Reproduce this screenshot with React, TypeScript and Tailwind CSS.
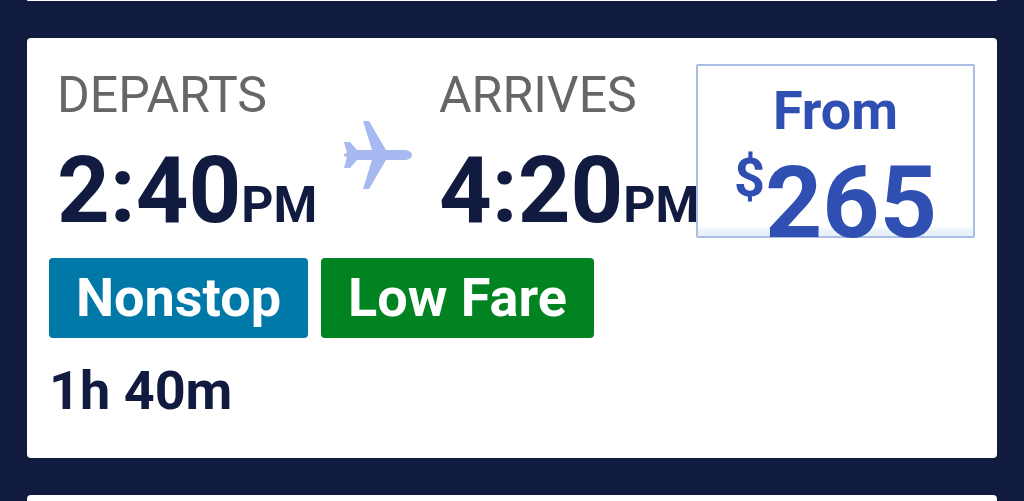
function Leg({ label, time }: { label: string; time: string }) {
  return (
    <div className="flex min-w-0 flex-col pt-[3px] whitespace-nowrap">
      <h2 className="text-[50px] leading-[56px] text-[#666666]">{label}</h2>
      <p className="mt-4 text-[92px] leading-[104px] font-bold text-[#111b40]">
        {time}
        <span className="text-[50px] leading-none">PM</span>
      </p>
    </div>
  );
}

function Plane() {
  return (
    <svg viewBox="0 0 70 70" className="mt-14 size-[70px] fill-[#a7b9f1]" aria-hidden="true">
      <path d="M20 1h6l17 29h18c4 0 8 2 8 5s-4 5-8 5H43L26 69h-6l9-29H14l-7 8H1l3-11c-4 0-4-4 0-4L1 22h6l7 8h15z" />
    </svg>
  );
}

export default function App() {
  return (
    <main className="flex min-h-screen flex-col gap-[37px] bg-[#111b40] px-[27px] font-['Roboto',sans-serif]">
      <div className="h-px rounded-b bg-white" />
      <article className="rounded bg-white pb-[34px]">
        <div className="grid grid-cols-[286px_96px_1fr_279px] items-start pt-[26px] pr-[22px] pl-[30px]">
          <Leg label="DEPARTS" time="2:40" />
          <Plane />
          <Leg label="ARRIVES" time="4:20" />
          <button
            type="button"
            className="relative flex h-[174px] flex-col items-center rounded-xs border-2 border-[#a9bde6] bg-linear-to-b from-white from-94% to-[#e9f2fb] to-97% pt-[13px] font-bold text-[#304fb3]"
          >
            <span className="text-[54px] leading-[64px]">From</span>
            <span className="flex items-start">
              <span className="text-[54px] leading-[70px]">$</span>
              <span className="mt-1 text-[100px] leading-[112px]">265</span>
            </span>
          </button>
        </div>
        <div className="flex gap-[13px] pt-[15px] pl-[22px] text-[54px] leading-[80px] font-bold text-white">
          <span className="rounded bg-[#0078a8] px-[27px]">Nonstop</span>
          <span className="rounded bg-[#008320] px-[27px]">Low Fare</span>
        </div>
        <p className="pt-5 pl-[22px] text-[54px] leading-[66px] font-bold text-[#111b40]">1h 40m</p>
      </article>
      <div className="h-[6px] rounded-t bg-white" />
    </main>
  );
}
